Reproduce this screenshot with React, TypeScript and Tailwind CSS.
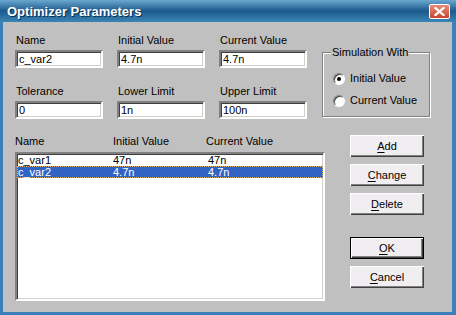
const font = { fontFamily: '"Liberation Sans", Arial, sans-serif' };

function Field({ label, value }: { label: string; value: string }) {
  return (
    <div className="flex flex-col">
      <div className="h-[13px] leading-[13px] pl-[1px]">{label}</div>
      <div className="mt-[3px] h-[18px] w-[88px] bg-white border-2 border-t-[#808080] border-l-[#808080] border-b-[#ffffff] border-r-[#ffffff] shadow-[inset_1px_1px_0_#404040,inset_-1px_-1px_0_#d4d0c8] pl-[2px] leading-[14px]">
        {value}
      </div>
    </div>
  );
}

function Radio({ label, checked }: { label: string; checked?: boolean }) {
  return (
    <div className="flex items-center h-[13px] leading-[13px]">
      <div className="w-[12px] h-[12px] rounded-full bg-white border border-t-[#808080] border-l-[#808080] border-b-[#ffffff] border-r-[#ffffff] shadow-[inset_1px_1px_0_#404040] flex items-center justify-center">
        {checked && <div className="w-[4px] h-[4px] rounded-full bg-black" />}
      </div>
      <span className="ml-[5px]">{label}</span>
    </div>
  );
}

function Btn({ label, u, def }: { label: string; u: number; def?: boolean }) {
  return (
    <div
      className={
        "w-[74px] h-[22px] bg-[#f0eef0] flex items-center justify-center leading-[13px] " +
        (def
          ? "border border-black shadow-[inset_1px_1px_0_#ffffff,inset_-1px_-1px_0_#404040,inset_-2px_-2px_0_#808080]"
          : "shadow-[inset_1px_1px_0_#ffffff,inset_-1px_-1px_0_#404040,inset_-2px_-2px_0_#808080]")
      }
    >
      <span>
        {label.slice(0, u)}
        <span className="underline underline-offset-[2px]">{label[u]}</span>
        {label.slice(u + 1)}
      </span>
    </div>
  );
}

const rows = [
  { name: "c_var1", init: "47n", cur: "47n" },
  { name: "c_var2", init: "4.7n", cur: "4.7n", sel: true },
];

export default function App() {
  return (
    <div className="w-[456px] h-[315px] bg-[#3d7fb8] flex flex-col text-[11px] text-black" style={font}>
      <div className="h-[22px] shrink-0 flex items-center justify-between bg-linear-to-b from-[#6aa8d0] via-[#1c5a8c] to-[#3a86b6]">
        <span className="ml-[7px] pt-[1px] text-[13px] font-bold text-white [text-shadow:1px_1px_0_#0a3050]">
          Optimizer Parameters
        </span>
        <div className="mr-[6px] w-[21px] h-[15px] rounded-[2px] border border-white bg-linear-to-b from-[#e88a78] to-[#c8442e] flex items-center justify-center">
          <svg width="11" height="9" viewBox="0 0 11 9">
            <path d="M1.5 1 L9.5 8 M9.5 1 L1.5 8" stroke="#ffffff" strokeWidth="2.2" strokeLinecap="square" />
          </svg>
        </div>
      </div>
      <div className="flex-1 ml-[3px] mr-[4px] mb-[3px] bg-[#c0c0c0] flex flex-col">
        <div className="flex pt-[12px] pl-[12px]">
          <div className="grid grid-cols-[88px_88px_88px] gap-x-[14px] gap-y-[17px]">
            <Field label="Name" value="c_var2" />
            <Field label="Initial Value" value="4.7n" />
            <Field label="Current Value" value="4.7n" />
            <Field label="Tolerance" value="0" />
            <Field label="Lower Limit" value="1n" />
            <Field label="Upper Limit" value="100n" />
          </div>
          <div className="relative ml-[15px] mt-[18px] w-[108px] h-[65px] border border-[#808080] shadow-[inset_1px_1px_0_#ffffff,1px_1px_0_#ffffff] pt-[19px] pl-[10px] flex flex-col gap-[9px]">
            <div className="absolute left-[8px] top-[-7px] px-[1px] bg-[#c0c0c0] leading-[13px]">Simulation With</div>
            <Radio label="Initial Value" checked />
            <Radio label="Current Value" />
          </div>
        </div>
        <div className="flex pl-[12px] mt-[16px]">
          <div className="flex flex-col">
            <div className="grid grid-cols-[98px_93px_1fr] h-[13px] leading-[13px]">
              <span>Name</span>
              <span>Initial Value</span>
              <span>Current Value</span>
            </div>
            <div className="mt-[4px] w-[310px] h-[149px] bg-white border-2 border-t-[#808080] border-l-[#808080] border-b-[#ffffff] border-r-[#ffffff] shadow-[inset_1px_1px_0_#404040,inset_-1px_-1px_0_#d4d0c8]">
              {rows.map((r) => (
                <div
                  key={r.name}
                  className={
                    "grid grid-cols-[95px_95px_1fr] h-[12px] leading-[10px] border " +
                    (r.sel
                      ? "bg-[#3163c5] text-white border-dotted border-[#d8b060]"
                      : "border-transparent")
                  }
                >
                  <span>{r.name}</span>
                  <span>{r.init}</span>
                  <span>{r.cur}</span>
                </div>
              ))}
            </div>
          </div>
          <div className="ml-[25px] flex flex-col gap-[7px]">
            <Btn label="Add" u={0} />
            <Btn label="Change" u={0} />
            <Btn label="Delete" u={0} />
            <div className="h-[8px]" />
            <Btn label="OK" u={0} def />
            <Btn label="Cancel" u={0} />
          </div>
        </div>
      </div>
    </div>
  );
}
